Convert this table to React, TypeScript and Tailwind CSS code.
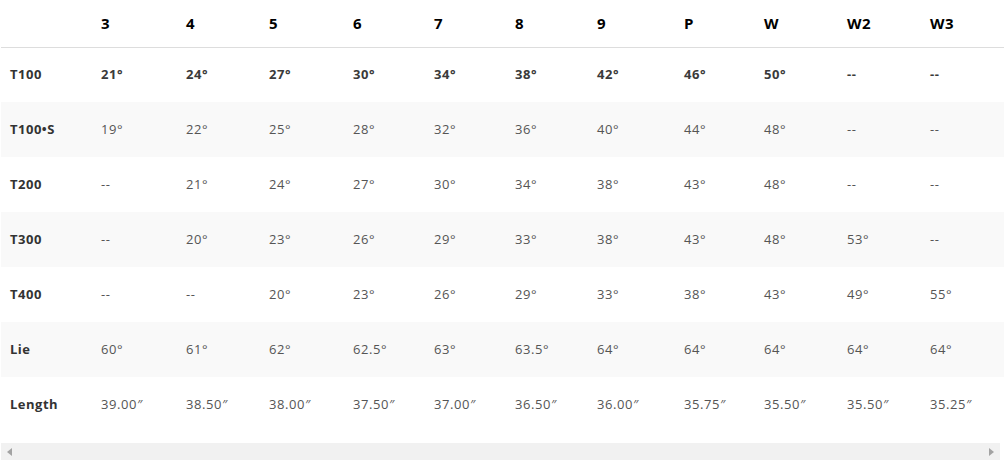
const cols = ["3", "4", "5", "6", "7", "8", "9", "P", "W", "W2", "W3"];
const widths = ["w-[90px]", "w-[85px]", "w-[83px]", "w-[84px]", "w-[81px]", "w-[81px]", "w-[82px]", "w-[87px]", "w-[80px]", "w-[83px]", "w-[83px]", "w-[85px]"];

const rows: { label: string; values: string[]; strong?: boolean }[] = [
  { label: "T100", strong: true, values: ["21°", "24°", "27°", "30°", "34°", "38°", "42°", "46°", "50°", "--", "--"] },
  { label: "T100•S", values: ["19°", "22°", "25°", "28°", "32°", "36°", "40°", "44°", "48°", "--", "--"] },
  { label: "T200", values: ["--", "21°", "24°", "27°", "30°", "34°", "38°", "43°", "48°", "--", "--"] },
  { label: "T300", values: ["--", "20°", "23°", "26°", "29°", "33°", "38°", "43°", "48°", "53°", "--"] },
  { label: "T400", values: ["--", "--", "20°", "23°", "26°", "29°", "33°", "38°", "43°", "49°", "55°"] },
  { label: "Lie", values: ["60°", "61°", "62°", "62.5°", "63°", "63.5°", "64°", "64°", "64°", "64°", "64°"] },
  { label: "Length", values: ["39.00″", "38.50″", "38.00″", "37.50″", "37.00″", "36.50″", "36.00″", "35.75″", "35.50″", "35.50″", "35.25″"] },
];

export default function App() {
  return (
    <div className="h-[465px] w-[1004px] overflow-hidden bg-white font-['Open_Sans',sans-serif]">
      <table className="table-fixed border-collapse w-[1004px] ml-px">
        <colgroup>
          {widths.map((w, i) => (
            <col key={i} className={w} />
          ))}
        </colgroup>
        <thead>
          <tr className="h-[47px] border-b border-[#dddddd]">
            <th />
            {cols.map((c) => (
              <th key={c} className="px-[10px] text-left text-[15px] font-bold tracking-[0.6px] text-black">
                {c}
              </th>
            ))}
            <th />
          </tr>
        </thead>
        <tbody>
          {rows.map((r, i) => (
            <tr key={r.label} className={`h-[55px] ${i % 2 === 1 ? "bg-[#f9f9f9]" : "bg-white"}`}>
              <td className="pl-[9px] text-[13px] font-bold tracking-[0.5px] text-[#333333]">{r.label}</td>
              {r.values.map((v, j) => (
                <td
                  key={j}
                  className={`px-[10px] text-[13px] tracking-[0.6px] ${r.strong ? "font-bold text-[#3a3a3a]" : "text-[#555555]"}`}
                >
                  {v}
                </td>
              ))}
              <td />
            </tr>
          ))}
        </tbody>
      </table>
      {/* horizontal scroll track */}
      <div className="mt-[11px] ml-px flex h-[17px] w-[999px] items-center justify-between bg-[#f1f1f1] px-[6px]">
        <svg width="5" height="8" viewBox="0 0 5 8">
          <path d="M5 0 L0 4 L5 8 Z" fill="#a3a3a3" />
        </svg>
        <svg width="5" height="8" viewBox="0 0 5 8">
          <path d="M0 0 L5 4 L0 8 Z" fill="#a3a3a3" />
        </svg>
      </div>
    </div>
  );
}
